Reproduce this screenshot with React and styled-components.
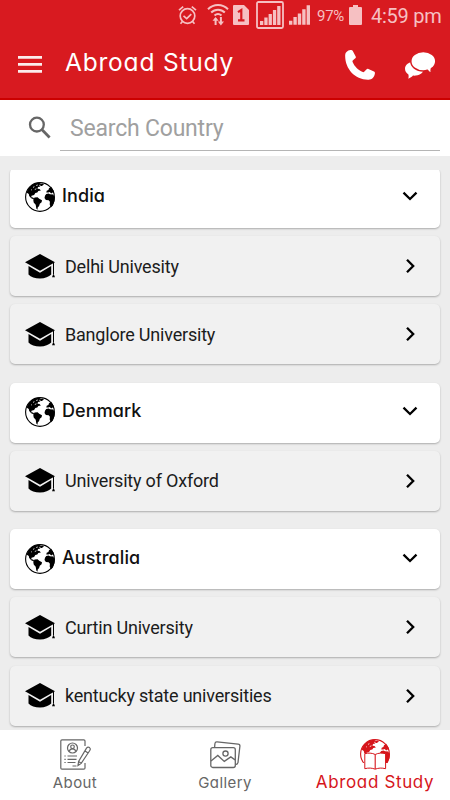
import styled, { createGlobalStyle } from 'styled-components';

const GROUPS = [
  { country: 'India', items: ['Delhi Univesity', 'Banglore University'] },
  { country: 'Denmark', items: ['University of Oxford'] },
  { country: 'Australia', items: ['Curtin University', 'kentucky state universities'] },
];

// ============================================
// ICONS
// ============================================

const AlarmIcon = () => (
  <svg width="19" height="20" viewBox="0 0 19 20" fill="none" stroke="currentColor" strokeWidth="1.7">
    <circle cx="9.5" cy="11" r="7.3" />
    <path d="M1 5.2 5.2 1.6M18 5.2l-4.2-3.6M5.5 10.8l3.2 2.8 4.6-4.4" />
    <path d="m4.4 16.5-1.9 2.2M14.6 16.5l1.9 2.2" />
  </svg>
);

const WifiIcon = () => (
  <svg width="22" height="24" viewBox="0 0 22 24" fill="none" stroke="currentColor" strokeWidth="2">
    <path d="M1 6.3C6.5.7 15.5.7 21 6.3M4.2 9.5c3.8-3.8 9.8-3.8 13.6 0M7.5 12.6c2.1-1.9 4.9-1.9 7 0" />
    <path d="M8.6 22v-6.5M13.9 14v6.5" />
    <path d="m5.5 17.8 3.1-3.9 3.1 3.9zM10.8 18.5l3.1 4 3.1-4z" fill="currentColor" stroke="none" />
  </svg>
);

const SimIcon = () => (
  <svg width="16" height="20" viewBox="0 0 16 20">
    <path d="M0 1q0-1 1-1h10l5 5v14q0 1-1 1H1q-1 0-1-1z" fill="currentColor" />
    <path d="M5 7.2 8.3 5v10.2M5 15.3h6.5" fill="none" stroke="#d81a20" strokeWidth="2.2" />
  </svg>
);

const Bars = () => (
  <path d="M0 15h3.3v4H0zM4.3 11.5h3.3V19H4.3zM8.6 8h3.3v11H8.6zM12.9 4h3.3v15h-3.3zM17.2 0h3.3v19h-3.3z" fill="currentColor" />
);

const SignalIcon = () => (
  <svg width="21" height="20" viewBox="0 0 20.5 19"><Bars /></svg>
);

const BoxedSignalIcon = () => (
  <svg width="28" height="28" viewBox="0 0 28 28">
    <rect x="1" y="1" width="26" height="26" rx="1.5" fill="none" stroke="currentColor" strokeWidth="1.8" />
    <g transform="translate(4 5)"><Bars /></g>
  </svg>
);

const BatteryIcon = () => (
  <svg width="13" height="20" viewBox="0 0 13 20">
    <path d="M4 0h5v2h3q1 0 1 1v16q0 1-1 1H1q-1 0-1-1V3q0-1 1-1h3z" fill="currentColor" />
  </svg>
);

const MenuIcon = () => (
  <svg width="24" height="17" viewBox="0 0 24 17" fill="currentColor" opacity="0.92">
    <path d="M0 0h24v2.7H0zM0 7h24v2.7H0zM0 14h24v2.7H0z" />
  </svg>
);

const PhoneIcon = () => (
  <svg width="30" height="30" viewBox="0 0 30 30" fill="currentColor">
    <path d="M.2 4.8C.3 2.5 2.5.6 5.4.1 6.5-.1 7.4.1 7.8 1L10.7 6.5C11.1 7.4 10.8 8.1 10 8.6L8 10.2C7.5 10.7 7.3 11.3 7.6 12 9.4 16.3 13.2 20.3 17.8 22c.7.3 1.2.1 1.6-.4l2-2.2c.6-.6 1.3-.8 2-.4L29 21.6c.8.4 1 1 .9 1.9C29.4 27.3 27 29.6 23.6 29.8 9.8 30.2-.5 18.3.2 4.8z" />
  </svg>
);

const ChatIcon = () => (
  <svg width="31" height="28" viewBox="0 0 31 28">
    <path d="M9 10.8c-5 0-9 3-9 7 0 2.3 1.3 4.3 3.4 5.6.4 1.7.3 3.1-.2 4.4 2-.7 3.7-1.8 4.8-3.2 5.4.3 10.1-1.8 10.4-5.8.2-4.3-4.3-8-9.4-8z" fill="#fff" />
    <path d="M18.3.6C11.2.6 5.8 4.8 5.8 10.2s5.4 9.7 12.5 9.7c1.5 0 2.8-.2 4-.6 1.2 1.6 2.6 2.8 4.3 3.6-.6-1.8-.6-3.5-.2-5.2 2.8-1.8 4.4-4.5 4.4-7.5C30.8 4.8 25.4.6 18.3.6z" fill="#fff" stroke="#d81a20" strokeWidth="1.5" />
  </svg>
);

const SearchIcon = () => (
  <svg width="23" height="23" viewBox="0 0 23 23" fill="none" stroke="#666" strokeWidth="2.3">
    <circle cx="8.9" cy="8.6" r="6.9" />
    <path d="m13.8 13.6 7.8 7.8" strokeWidth="2.8" />
  </svg>
);

const Land = () => (
  <>
    <path d="M1.5 10.5 4 5.5 8.5 2l5-1.5 2.5 1.2-1.8 1.5 1.2 1.2-2.4.6-.5 1.8 2 .3 1.4 1.5-2.6.3-1 1.5-2 .7-1.2 2-2.6.6-.2 1.5 1.7.2 2 2-1 .2-2.8-1.3-2-2.2-.4-2z" />
    <path d="m9.5 15.4 3.1-.2 1.6 1.6 2.8 1.5-.4 2-1.8 1.5-.7 2.3-1.4 1.3-.2 2.4-1.2-1.2-.6-3.9-2-2.2-.4-2.6z" />
    <path d="m20 13.8 1.2-1.8 2.4-.6 1.4.9 3.2.1 1.6 2.8-.3 4-1.6 4.2-2 2.2-1.2-3.1.2-2.8-1.2-1.5-2.8-.2-1.4-2z" />
    <path d="m21.3 10.4.4-1.6 1.7-.8.6-1.7 2.2-1.6 2.6 4.4.5 2.3-1.7-.8-1.4.8-1.5-1.4-1.4.6z" />
    <path d="m14.8 2.2 2.8-.6 1.3.8-2 1.7-1.3-.2z" />
  </>
);

const GlobeIcon = () => (
  <svg width="30" height="30" viewBox="0 0 30 30">
    <circle cx="15" cy="15" r="14.4" fill="#fff" stroke="#000" strokeWidth="1.1" />
    <Land />
    <path d="m8 5.4 1.4-.7M9.8 7.5l1.6-.7M6 7.6l.8.4M11.2 3.5l1.6-.5" stroke="#fff" strokeWidth=".8" />
  </svg>
);

const CapIcon = () => (
  <svg width="30" height="25" viewBox="0 0 30 25">
    <path d="M0 8.2 15 0l15 8.2-15 8.6zM3.5 12 15 18.7 26.2 12v8.6C24 23 20 24.5 15 24.5S5.8 23 3.5 20.5z" />
    <path d="M28.5 9v11" stroke="#000" strokeWidth="1" />
    <path d="m28.5 19.5 1.5 3.7h-3z" />
  </svg>
);

const Chevron = ({ down }) => (
  <svg width="16" height="16" viewBox="0 0 16 16" fill="none" stroke="#000" strokeWidth="2.3">
    <path d={down ? 'm1.5 3.7 6.5 6.3 6.5-6.3' : 'm5 1.7 6.2 6.3L5 14.3'} />
  </svg>
);

const AboutIcon = () => (
  <svg width="31" height="31" viewBox="0 0 31 31" fill="none" stroke="currentColor" strokeWidth="1.2">
    <path d="M25 7V2q0-1.2-1.2-1.2H2Q.8.8.8 2v27q0 1.2 1.2 1.2h21.8q1.2 0 1.2-1.2v-5" />
    <circle cx="12.5" cy="9" r="5" />
    <circle cx="12.5" cy="7.8" r="1.8" />
    <path d="M9.3 12.5c.6-3.4 5.8-3.4 6.4 0M7.5 17H17M7.5 20.3h9M7.5 23.5h8M12.5 27h4M4.4 17h1.3M4.4 20.3h1.3M4.4 23.5h1.3" />
    <path d="M26.5 9.2q1.4-1.8 3-.6 1.4 1.2.3 2.9l-8.6 12.8-3.2 2.2.6-4zM24.8 11.7l3.2 2.3M18.6 22.5l2.6 1.8" />
  </svg>
);

const GalleryIcon = () => (
  <svg width="31" height="28" viewBox="0 0 31 28" fill="none" stroke="currentColor" strokeWidth="1.3">
    <rect x=".8" y="6.7" width="24.5" height="19.8" rx="2" />
    <path d="m4.6 6.5.3-3.8q.2-2 2.2-1.8l21 2.2q2 .2 1.8 2.2L28 21.5q-.3 2-2.5 2M1 20l6.8-5.6 6.5 6 6.5-4.5 4.3 3" />
    <circle cx="15.5" cy="12.6" r="2.6" />
  </svg>
);

const StudyIcon = () => (
  <svg width="30" height="31" viewBox="0 0 30 31">
    <g fill="currentColor">
      <circle cx="15" cy="15" r="14.4" fill="#fff" stroke="currentColor" strokeWidth="1.1" />
      <Land />
    </g>
    <path d="m8 5.4 1.4-.7M9.8 7.5l1.6-.7M6 7.6l.8.4" stroke="#fff" strokeWidth=".8" />
    <path d="M2.5 24v7h25v-7z" fill="#fff" />
    <path d="M15.2 15.5C12 13.8 8.2 13.8 4.8 14.7v15c3.8-1 7.2-.8 10.4.5 3.2-1.3 6.6-1.5 10.4-.5v-15c-3.4-.9-7.2-.9-10.4.8z" fill="#fff" stroke="currentColor" strokeWidth="1" />
    <path d="M15.2 15.5v14.5" stroke="currentColor" strokeWidth="1.1" />
  </svg>
);

const TABS = [
  { label: 'About', Icon: AboutIcon },
  { label: 'Gallery', Icon: GalleryIcon },
  { label: 'Abroad Study', Icon: StudyIcon, active: true },
];

const App = () => (
  <>
    <GlobalStyle />
    <Screen>
      <StatusBar>
        <AlarmIcon />
        <WifiIcon />
        <SimIcon />
        <BoxedSignalIcon />
        <SignalIcon />
        <Percent>97%</Percent>
        <BatteryIcon />
        <Clock>4:59 pm</Clock>
      </StatusBar>
      <Toolbar>
        <MenuIcon />
        <Title>Abroad Study</Title>
        <PhoneIcon />
        <ChatIcon />
      </Toolbar>
      <SearchBar>
        <SearchIcon />
        <SearchField placeholder="Search Country" />
      </SearchBar>
      <List>
        {GROUPS.map((group) => (
          <Group key={group.country}>
            <CountryCard>
              <GlobeIcon />
              <CountryName>{group.country}</CountryName>
              <Chevron down />
            </CountryCard>
            {group.items.map((name) => (
              <UniversityCard key={name}>
                <CapIcon />
                <UniversityName>{name}</UniversityName>
                <Chevron />
              </UniversityCard>
            ))}
          </Group>
        ))}
      </List>
      <TabBar>
        {TABS.map(({ label, Icon, active }) => (
          <Tab key={label} $active={active}>
            <TabIcon><Icon /></TabIcon>
            <TabLabel $active={active}>{label}</TabLabel>
          </Tab>
        ))}
      </TabBar>
    </Screen>
  </>
);

// ============================================
// STYLED COMPONENTS
// ============================================

const GlobalStyle = createGlobalStyle`
  * {
    box-sizing: border-box;
  }

  body {
    margin: 0;
    font-family: Roboto, sans-serif;
  }

  svg {
    display: block;
    flex: none;
  }
`;

const Screen = styled.div`
  width: 450px;
  height: 800px;
  display: flex;
  flex-direction: column;
  overflow: hidden;
  background: #ededed;
`;

const StatusBar = styled.div`
  height: 32px;
  flex: none;
  display: flex;
  align-items: center;
  padding: 0 10px 2px 178px;
  background: #d81a20;
  color: #f6c0c2;

  svg:nth-of-type(2) {
    margin: 0 4px 0 10px;
  }

  svg:nth-of-type(4) {
    margin: 0 5px 0 7px;
  }
`;

const Percent = styled.span`
  width: 32px;
  flex: none;
  margin-left: 7px;
  font-size: 15px;
  letter-spacing: -0.3px;
  padding-top: 2px;
`;

const Clock = styled.span`
  margin-left: 9px;
  font-size: 20px;
  letter-spacing: -0.25px;
  white-space: nowrap;
  padding-top: 2px;
`;

const Toolbar = styled.header`
  height: 68px;
  flex: none;
  display: flex;
  align-items: center;
  padding: 0 14px 1px 18px;
  background: #d81a20;
  border-bottom: 2px solid #cc0000;
  color: #fff;

  svg:last-child {
    margin-left: 30px;
  }
`;

const Title = styled.h1`
  flex: 1;
  margin: 0 0 6px 23px;
  font: 400 24.5px Inter, sans-serif;
  font-feature-settings: 'cv11';
  letter-spacing: 0.8px;
`;

const SearchBar = styled.div`
  height: 56px;
  flex: none;
  display: flex;
  align-items: center;
  gap: 9px;
  padding: 0 10px 2px 28px;
  background: #fff;
`;

const SearchField = styled.input`
  flex: 1;
  height: 51px;
  margin-top: -3px;
  padding: 6px 10px 0;
  border: 0;
  border-bottom: 1px solid #b5b5b5;
  outline: 0;
  font: 400 23px Roboto, sans-serif;
  letter-spacing: -0.2px;

  &::placeholder {
    color: #a0a0a0;
    opacity: 1;
  }
`;

const List = styled.main`
  flex: 1;
  min-height: 0;
  margin-top: 14px;
  padding: 0 10px;
  overflow: hidden;
`;

const Group = styled.section`
  display: flex;
  flex-direction: column;
  gap: 8.3px;
  margin-bottom: 18.3px;

  &:first-child {
    margin-top: -2.3px;
  }
`;

const Card = styled.div`
  height: 60px;
  flex: none;
  display: flex;
  align-items: center;
  padding: 0 22px 0 15px;
  border-radius: 5px;
  box-shadow: 0 1px 2px rgba(0, 0, 0, 0.28);
`;

const CountryCard = styled(Card)`
  padding-bottom: 1px;
  background: #fff;
`;

const UniversityCard = styled(Card)`
  background: #f1f1f1;
`;

const CountryName = styled.h2`
  flex: 1;
  margin: 0 0 3px 7px;
  font: 500 18px Inter, sans-serif;
  font-feature-settings: 'cv11';
  letter-spacing: 0.1px;
  color: #111;
`;

const UniversityName = styled.span`
  flex: 1;
  margin-left: 10px;
  font-size: 18px;
  letter-spacing: -0.2px;
  color: #1c1c1c;
`;

const TabBar = styled.nav`
  height: 70px;
  flex: none;
  display: grid;
  grid-template-columns: repeat(3, 1fr);
  background: #fff;
`;

const Tab = styled.div`
  display: flex;
  flex-direction: column;
  align-items: center;
  padding-top: 8px;
  color: ${({ $active }) => ($active ? '#d6151b' : '#666')};
`;

const TabIcon = styled.div`
  height: 33px;
  display: flex;
  align-items: center;
`;

const TabLabel = styled.span`
  font: 400 ${({ $active }) => ($active ? '17px/22px' : '15px/24px')} Inter, sans-serif;
  font-feature-settings: 'cv11';
  letter-spacing: ${({ $active }) => ($active ? '0.65px' : '0.4px')};
  white-space: nowrap;
`;

export default App;
